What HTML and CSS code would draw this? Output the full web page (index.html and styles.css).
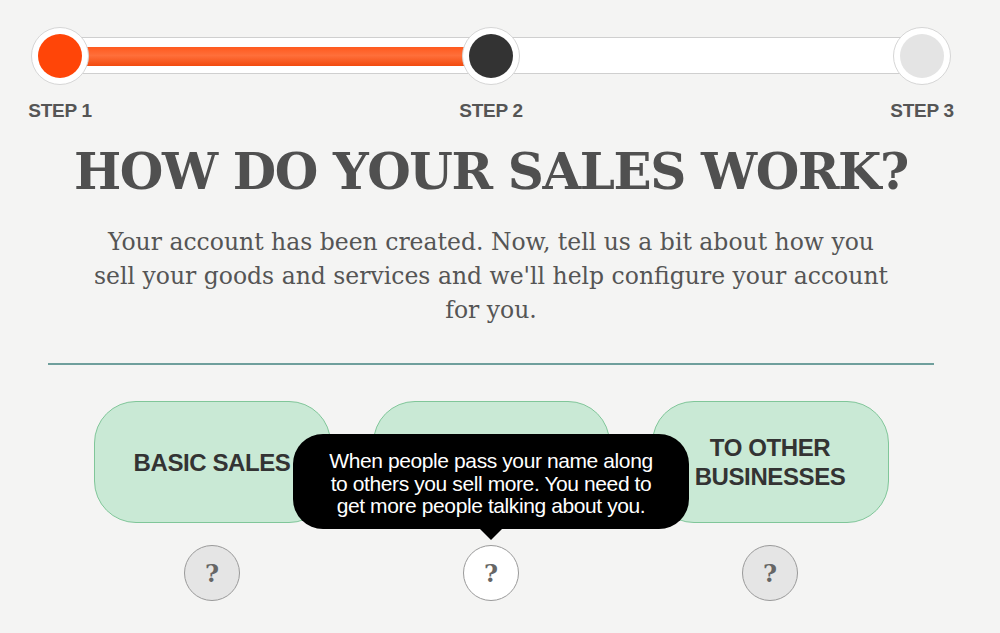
FILE: index.html
```html
<!DOCTYPE html>
<html>
<head>
<meta charset="utf-8">
<link rel="stylesheet" href="styles.css">
</head>
<body>
<div class="progress">
  <div class="track"><div class="fill"></div></div>
  <div class="step">
    <div class="dot"><span class="dot-inner done"></span></div>
    <div class="step-label">STEP 1</div>
  </div>
  <div class="step">
    <div class="dot"><span class="dot-inner current"></span></div>
    <div class="step-label">STEP 2</div>
  </div>
  <div class="step">
    <div class="dot"><span class="dot-inner todo"></span></div>
    <div class="step-label">STEP 3</div>
  </div>
</div>

<main class="content">
  <h1 class="title">HOW DO YOUR SALES WORK?</h1>
  <p class="intro">Your account has been created. Now, tell us a bit about how you sell your goods and services and we'll help configure your account for you.</p>
  <hr class="rule">
  <div class="options">
    <div class="option">
      <button class="pill">BASIC SALES</button>
      <span class="help">?</span>
    </div>
    <div class="option">
      <button class="pill" aria-label="Word of mouth"></button>
      <span class="help active">?</span>
      <div class="tooltip">When people pass your name along<br>to others you sell more. You need to<br>get more people talking about you.</div>
    </div>
    <div class="option">
      <button class="pill">TO OTHER<br>BUSINESSES</button>
      <span class="help">?</span>
    </div>
  </div>
</main>
</body>
</html>
```

FILE: styles.css
```css
* { box-sizing: border-box; }
html, body { margin: 0; padding: 0; }
body {
  width: 1000px;
  height: 633px;
  overflow: hidden;
  background: #f4f4f3;
  font-family: "Liberation Sans", Arial, sans-serif;
  color: #555;
}

.progress {
  position: relative;
  width: 942px;
  margin: 27px 0 0 20px;
  display: flex;
  justify-content: space-between;
}
.track {
  position: absolute;
  left: 40px;
  right: 40px;
  top: 10px;
  height: 37px;
  background: #fff;
  border: 1px solid #cfcfcf;
  border-radius: 2px;
}
.fill {
  margin-top: 9px;
  width: 440px;
  height: 19px;
  background: linear-gradient(#ff5a1e, #ff6f3a 45%, #f24a0e);
}
.step {
  position: relative;
  width: 80px;
  display: flex;
  flex-direction: column;
  align-items: center;
}
.dot {
  width: 58px;
  height: 58px;
  border-radius: 50%;
  background: #fff;
  border: 1px solid #d6d6d6;
  display: flex;
  align-items: center;
  justify-content: center;
}
.dot-inner {
  width: 44px;
  height: 44px;
  border-radius: 50%;
}
.dot-inner.done { background: #ff4508; }
.dot-inner.current { background: #333; }
.dot-inner.todo { background: #e4e4e4; }
.step-label {
  margin-top: 15px;
  font-size: 19px;
  font-weight: bold;
  color: #555;
  white-space: nowrap;
  letter-spacing: -0.3px;
}

.content {
  width: 886px;
  margin-left: 48px;
}
.title {
  margin: 20px 0 0;
  text-align: center;
  font-family: "DejaVu Serif", serif;
  font-weight: bold;
  font-size: 50px;
  line-height: 60px;
  letter-spacing: -1.4px;
  color: #505050;
}
.intro {
  width: 800px;
  margin: 23px auto 0;
  text-align: center;
  font-family: "DejaVu Serif", serif;
  font-size: 23.5px;
  line-height: 34px;
  color: #555;
}
.rule {
  margin: 36px 0 0;
  border: 0;
  height: 2px;
  background: #6f9f9c;
}

.options {
  display: flex;
  justify-content: center;
  gap: 42px;
  margin-top: 36px;
}
.option {
  position: relative;
  width: 237px;
  display: flex;
  flex-direction: column;
  align-items: center;
}
.pill {
  width: 237px;
  height: 122px;
  border-radius: 42px;
  background: #c9e9d5;
  border: 1.5px solid #80c699;
  font-family: "Liberation Sans", Arial, sans-serif;
  font-weight: bold;
  font-size: 24px;
  line-height: 29px;
  color: #333;
  letter-spacing: -0.4px;
  padding: 0;
}
.help {
  margin-top: 22px;
  width: 56px;
  height: 56px;
  border-radius: 50%;
  background: #e5e5e5;
  border: 1.5px solid #9a9a9a;
  display: flex;
  align-items: center;
  justify-content: center;
  font-family: "DejaVu Serif", serif;
  font-weight: bold;
  font-size: 24px;
  color: #666;
}
.help.active { background: #fff; }

.tooltip {
  position: absolute;
  z-index: 5;
  left: 50%;
  top: 33px;
  width: 396px;
  margin-left: -198px;
  height: 95px;
  padding-top: 16px;
  background: #000;
  border-radius: 30px;
  color: #fff;
  font-size: 21px;
  line-height: 22.5px;
  text-align: center;
  letter-spacing: -0.4px;
  white-space: nowrap;
}
.tooltip::after {
  content: "";
  position: absolute;
  left: 50%;
  bottom: -11px;
  margin-left: -11px;
  border-left: 11px solid transparent;
  border-right: 11px solid transparent;
  border-top: 11px solid #000;
}
```
